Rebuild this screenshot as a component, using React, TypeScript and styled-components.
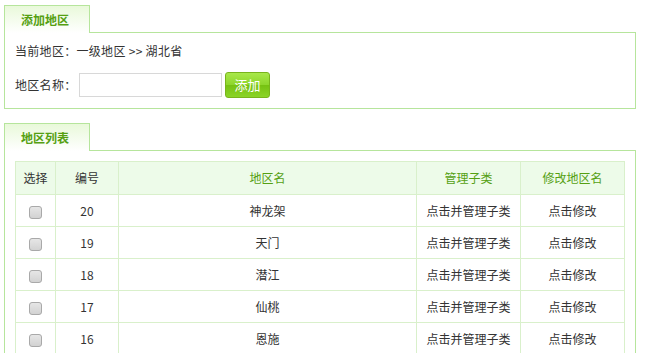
import styled, { createGlobalStyle } from 'styled-components';

const GlobalStyle = createGlobalStyle`
  html, body {
    margin: 0;
    padding: 0;
    background: #fff;
  }
  body {
    font-family: 'Noto Sans CJK SC', 'DejaVu Sans', sans-serif;
    font-size: 12px;
    color: #333;
  }
`;

interface IRegion {
  id: number;
  name: string;
}

const regions: IRegion[] = [
  { id: 20, name: '神龙架' },
  { id: 19, name: '天门' },
  { id: 18, name: '潜江' },
  { id: 17, name: '仙桃' },
  { id: 16, name: '恩施' },
];

const App = () => {
  const rows = regions.map(({ id, name }) => (
    <tr key={id}>
      <Td>
        <Check type='checkbox' />
      </Td>
      <Td>{id}</Td>
      <Td>{name}</Td>
      <Td>点击并管理子类</Td>
      <Td>点击修改</Td>
    </tr>
  ));

  return (
    <Page>
      <GlobalStyle />
      <Section>
        <Tab>添加地区</Tab>
        <Panel>
          <Line>当前地区：一级地区 &gt;&gt; 湖北省</Line>
          <FormRow>
            <Label>地区名称：</Label>
            <Input type='text' />
            <AddButton>添加</AddButton>
          </FormRow>
        </Panel>
      </Section>
      <Section>
        <Tab>地区列表</Tab>
        <TablePanel>
          <Table>
            <colgroup>
              <col style={{ width: 40 }} />
              <col style={{ width: 63 }} />
              <col style={{ width: 298 }} />
              <col style={{ width: 104 }} />
              <col style={{ width: 104 }} />
            </colgroup>
            <thead>
              <tr>
                <Th>选择</Th>
                <Th>编号</Th>
                <Th green>地区名</Th>
                <Th green>管理子类</Th>
                <Th green>修改地区名</Th>
              </tr>
            </thead>
            <tbody>{rows}</tbody>
          </Table>
        </TablePanel>
      </Section>
    </Page>
  );
};

export default App;

const Page = styled.div`
  width: 632px;
  padding: 5px 0 0 4px;
  display: flex;
  flex-direction: column;
  gap: 14px;
`;
const Section = styled.div`
  display: flex;
  flex-direction: column;
`;
const Tab = styled.div`
  position: relative;
  z-index: 1;
  width: 68px;
  height: 27px;
  margin-bottom: -1px;
  border: 1px solid #b6e59c;
  border-bottom: none;
  background: linear-gradient(#e9f9da, #ffffff);
  color: #55a012;
  font-weight: bold;
  font-size: 12px;
  line-height: 27px;
  padding-left: 16px;
`;
const Panel = styled.div`
  border: 1px solid #b6e59c;
  padding: 8px 10px 10px;
  display: flex;
  flex-direction: column;
  gap: 10px;
`;
const Line = styled.div`
  height: 20px;
  line-height: 20px;
  letter-spacing: 0.3px;
`;
const FormRow = styled.div`
  display: flex;
  align-items: center;
  height: 27px;
`;
const Label = styled.span`
  width: 64px;
  letter-spacing: 0.3px;
`;
const Input = styled.input`
  box-sizing: border-box;
  width: 143px;
  height: 24px;
  border: 1px solid #d8d8d8;
  outline: none;
  padding: 0 4px;
  margin: 0;
`;
const AddButton = styled.button`
  box-sizing: border-box;
  margin-left: 3px;
  width: 45px;
  height: 26px;
  border: 1px solid #78b41c;
  border-radius: 3px;
  background: linear-gradient(#a8e84a 0%, #8ed62c 48%, #76c212 52%, #8bd428 100%);
  color: #fff;
  font-family: 'Noto Sans CJK SC', sans-serif;
  font-size: 13px;
  padding: 0;
`;
const TablePanel = styled.div`
  border: 1px solid #b6e59c;
  padding: 10px;
`;
const Table = styled.table`
  width: 610px;
  border-collapse: collapse;
  table-layout: fixed;
`;
const Th = styled.th<{ green?: boolean }>`
  height: 32px;
  padding: 0;
  line-height: 16px;
  border: 1px solid #d9f0cb;
  background: #edfbe9;
  font-weight: normal;
  font-size: 12px;
  text-align: center;
  color: ${({ green }) => (green ? '#55a012' : '#333')};
`;
const Td = styled.td`
  height: 31px;
  border: 1px solid #d9f0cb;
  text-align: center;
  padding: 0;
  line-height: 16px;
`;
const Check = styled.input`
  appearance: none;
  box-sizing: border-box;
  width: 13px;
  height: 13px;
  margin: 0;
  vertical-align: middle;
  border: 1px solid #a9a9a9;
  border-radius: 3px;
  background: linear-gradient(#e6e6e6, #d2d2d2);
`;
